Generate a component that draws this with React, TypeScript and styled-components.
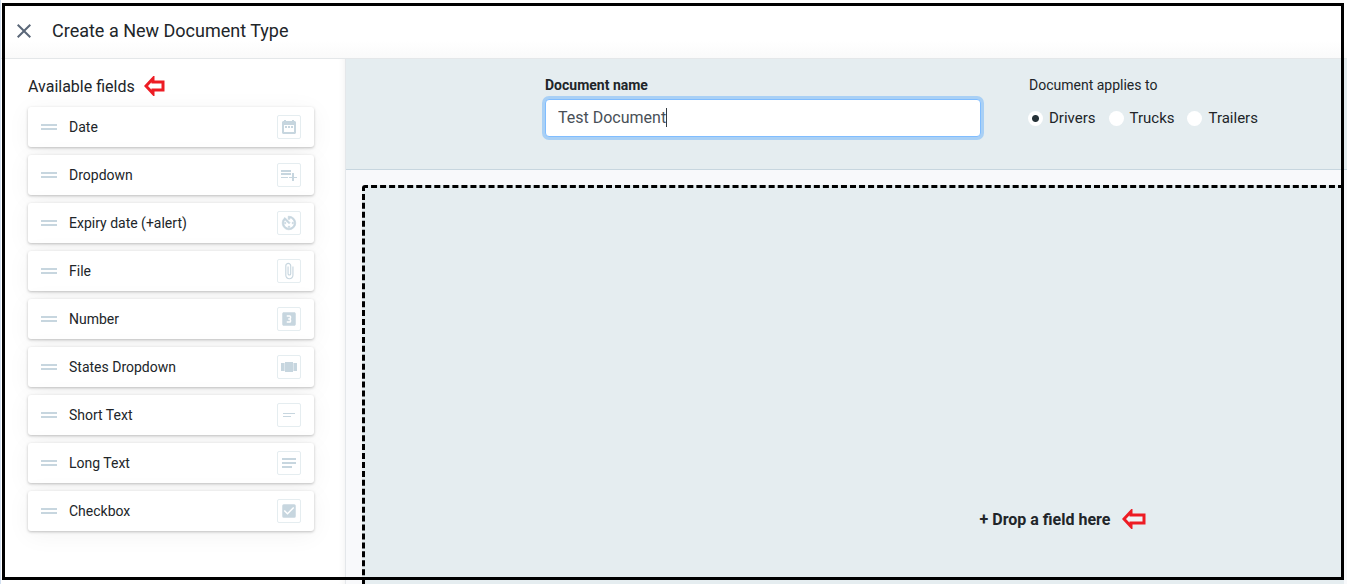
import React, { useState } from "react";
import type { ReactNode } from "react";
import styled, { createGlobalStyle } from "styled-components";
import {
  MdAttachFile,
  MdAvTimer,
  MdCheckBox,
  MdClose,
  MdLooks3,
} from "react-icons/md";

const GlobalStyle = createGlobalStyle`
  *, *::before, *::after { box-sizing: border-box; }
  body {
    margin: 0;
    background: #fff;
    color: #212529;
    font-family: Roboto, "Liberation Sans", sans-serif;
    font-size: 14px;
    line-height: 20px;
  }
`;

const Page = styled.div`
  position: relative;
  display: flex;
  flex-direction: column;
  height: 100vh;
  overflow: hidden;
  border-left: 1px solid #d3e0f0;
`;

const Frame = styled.div`
  position: absolute;
  inset: 3px 3px 4px 1px;
  border: 3px solid #000;
  pointer-events: none;
  z-index: 2;
`;

const Header = styled.header`
  display: flex;
  align-items: center;
  gap: 16px;
  flex: none;
  height: 59px;
  padding: 3px 11px 0;
  border-bottom: 1px solid #e4e7e9;
  background: linear-gradient(#fff 70%, #fafafa);
`;

const CloseButton = styled.button`
  display: flex;
  padding: 0;
  border: 0;
  background: none;
  color: #5a6778;
  cursor: pointer;
`;

const Title = styled.h1`
  margin: 0;
  font-size: 18px;
  font-weight: 400;
  line-height: 24px;
`;

const Body = styled.div`
  display: flex;
  flex: 1;
  min-height: 0;
`;

const Sidebar = styled.aside`
  flex: none;
  width: 345px;
  padding: 16px 31px 0 27px;
  border-right: 1px solid #e4e7ea;
  box-shadow: inset -6px 0 6px -5px rgba(0, 0, 0, 0.06);
`;

const SidebarTitle = styled.h2`
  display: flex;
  align-items: center;
  gap: 9px;
  margin: 0 0 8px;
  font-size: 16px;
  font-weight: 400;
  line-height: 24px;
`;

const FieldList = styled.ul`
  display: flex;
  flex-direction: column;
  gap: 8px;
  margin: 0;
  padding: 0;
  list-style: none;
`;

const FieldCard = styled.li`
  display: flex;
  align-items: center;
  gap: 12px;
  height: 40px;
  padding: 0 13px;
  border-radius: 3px;
  background: #fff;
  box-shadow: 0 1px 3px rgba(0, 0, 0, 0.24), 0 4px 24px rgba(0, 0, 0, 0.05);
  cursor: grab;
`;

const Handle = styled.span`
  width: 16px;
  height: 6px;
  border: solid #c7d6df;
  border-width: 2px 0;
`;

const FieldName = styled.span`
  flex: 1;
`;

const IconBox = styled.span`
  display: flex;
  align-items: center;
  justify-content: center;
  width: 24px;
  height: 24px;
  border: 1px solid #e5edf0;
  border-radius: 2px;
  color: #c7d6df;

  path[fill="none"] {
    stroke: none;
  }
`;

const Main = styled.main`
  display: flex;
  flex: 1;
  flex-direction: column;
  min-width: 0;
  background: #f8f9fb;
`;

const Settings = styled.form`
  display: flex;
  gap: 47px;
  flex: none;
  height: 111px;
  padding: 16px 0 0 199px;
  border-bottom: 1px solid #c7d6df;
  background: #e5edf0;
`;

const NameGroup = styled.div`
  flex: 0 1 436px;
`;

const NameLabel = styled.label`
  display: block;
  margin-bottom: 4px;
  font-weight: 700;
`;

const NameBox = styled.div`
  position: relative;
`;

const NameInput = styled.input`
  display: block;
  width: 100%;
  height: 38px;
  padding: 0 12px 1px;
  border: 1px solid #80bdff;
  border-radius: 4px;
  outline: 0;
  background: #fff;
  box-shadow: 0 0 0 3px #a9d0f5;
  color: #495057;
  caret-color: transparent;
  font: inherit;
  font-size: 16px;
`;

const Caret = styled.span`
  position: absolute;
  top: 9px;
  left: 121px;
  width: 1px;
  height: 19px;
  background: #333b42;
  pointer-events: none;
`;

const AppliesTo = styled.fieldset`
  min-width: 0;
  margin: 0;
  padding: 0;
  border: 0;
`;

const Legend = styled.legend`
  margin-bottom: 12px;
  padding: 0 0 0 1px;
`;

const Options = styled.div`
  display: flex;
  gap: 13px;
`;

const Option = styled.label`
  display: flex;
  align-items: center;
  gap: 6px;
  font-size: 15px;
  line-height: 22px;
`;

const Radio = styled.input`
  appearance: none;
  width: 15px;
  height: 15px;
  margin: 0;
  border-radius: 50%;
  background: #fff;

  &:checked {
    background: radial-gradient(circle, #263238 3px, #fff 4px);
  }
`;

const DropArea = styled.section`
  display: flex;
  align-items: flex-end;
  justify-content: center;
  flex: 1;
  margin: 15px 3px -18px 16px;
  padding: 0 0 67px 417px;
  border: 3px dashed #000;
  border-right: 0;
  border-radius: 3px 0 0 3px;
  background: #e5edf0;
`;

const DropHint = styled.p`
  display: flex;
  align-items: center;
  gap: 12px;
  margin: 0;
  font-size: 16px;
  font-weight: 700;
  line-height: 24px;
`;

const ArrowIcon = styled.svg`
  flex: none;
  margin-bottom: 2px;
`;

const Arrow = ({ width }: { width: number }) => (
  <ArrowIcon width={width} height="20" viewBox={`0 0 ${width} 20`} aria-hidden="true">
    <path
      d={`M2 10 L9 2.5 V6 H${width - 2} V14 H9 V17.5 Z`}
      fill="#fff"
      fillOpacity="0.4"
      stroke="#ed1c24"
      strokeWidth="3"
    />
  </ArrowIcon>
);

const Glyph = ({ d }: { d: string }) => (
  <svg width="16" height="16" viewBox="0 0 16 16" fill="currentColor" aria-hidden="true">
    <path fillRule="evenodd" d={d} />
  </svg>
);

const fields: { name: string; icon: ReactNode }[] = [
  {
    name: "Date",
    icon: (
      <Glyph d="M3 1h2v1h6V1h2v1h1l1 1v11l-1 1H2l-1-1V3l1-1h1zM3 6v7h10V6zM4 7h2v2H4zM7 7h2v2H7zM10 7h2v2h-2z" />
    ),
  },
  {
    name: "Dropdown",
    icon: <Glyph d="M0 3h10v2H0zM0 6h10v2H0zM0 10h7v1H0zM8 10h3V6h2v4h3v1h-3v3h-2v-3H8z" />,
  },
  {
    name: "Expiry date (+alert)",
    icon: <MdAvTimer size={18} stroke="currentColor" strokeWidth={1} />,
  },
  { name: "File", icon: <MdAttachFile size={18} stroke="currentColor" strokeWidth={0} /> },
  { name: "Number", icon: <MdLooks3 size={18} /> },
  {
    name: "States Dropdown",
    icon: <Glyph d="M4 3h8v10H4zM0 4h3.600v8H0zM12.400 4H16v8h-3.600z" />,
  },
  { name: "Short Text", icon: <Glyph d="M2 6h12v1H2zM2 9h8v1H2z" /> },
  { name: "Long Text", icon: <Glyph d="M1 3h14v2H1zM1 7h14v2H1zM1 11h10v2H1z" /> },
  { name: "Checkbox", icon: <MdCheckBox size={18} /> },
];

const targets = ["Drivers", "Trucks", "Trailers"];

export default function App() {
  const [name, setName] = useState("Test Document");
  const [target, setTarget] = useState("Drivers");

  return (
    <Page>
      <GlobalStyle />
      <Header>
        <CloseButton type="button" aria-label="Close">
          <MdClose size={24} />
        </CloseButton>
        <Title>Create a New Document Type</Title>
      </Header>
      <Body>
        <Sidebar>
          <SidebarTitle>
            Available fields
            <Arrow width={21} />
          </SidebarTitle>
          <FieldList>
            {fields.map((field) => (
              <FieldCard key={field.name} draggable>
                <Handle />
                <FieldName>{field.name}</FieldName>
                <IconBox>{field.icon}</IconBox>
              </FieldCard>
            ))}
          </FieldList>
        </Sidebar>
        <Main>
          <Settings>
            <NameGroup>
              <NameLabel htmlFor="document-name">Document name</NameLabel>
              <NameBox>
                <NameInput
                  id="document-name"
                  value={name}
                  onChange={(e) => setName(e.target.value)}
                />
                <Caret />
              </NameBox>
            </NameGroup>
            <AppliesTo>
              <Legend>Document applies to</Legend>
              <Options>
                {targets.map((t) => (
                  <Option key={t}>
                    <Radio
                      type="radio"
                      name="applies-to"
                      checked={target === t}
                      onChange={() => setTarget(t)}
                    />
                    {t}
                  </Option>
                ))}
              </Options>
            </AppliesTo>
          </Settings>
          <DropArea>
            <DropHint>
              + Drop a field here
              <Arrow width={24} />
            </DropHint>
          </DropArea>
        </Main>
      </Body>
      <Frame />
    </Page>
  );
}
